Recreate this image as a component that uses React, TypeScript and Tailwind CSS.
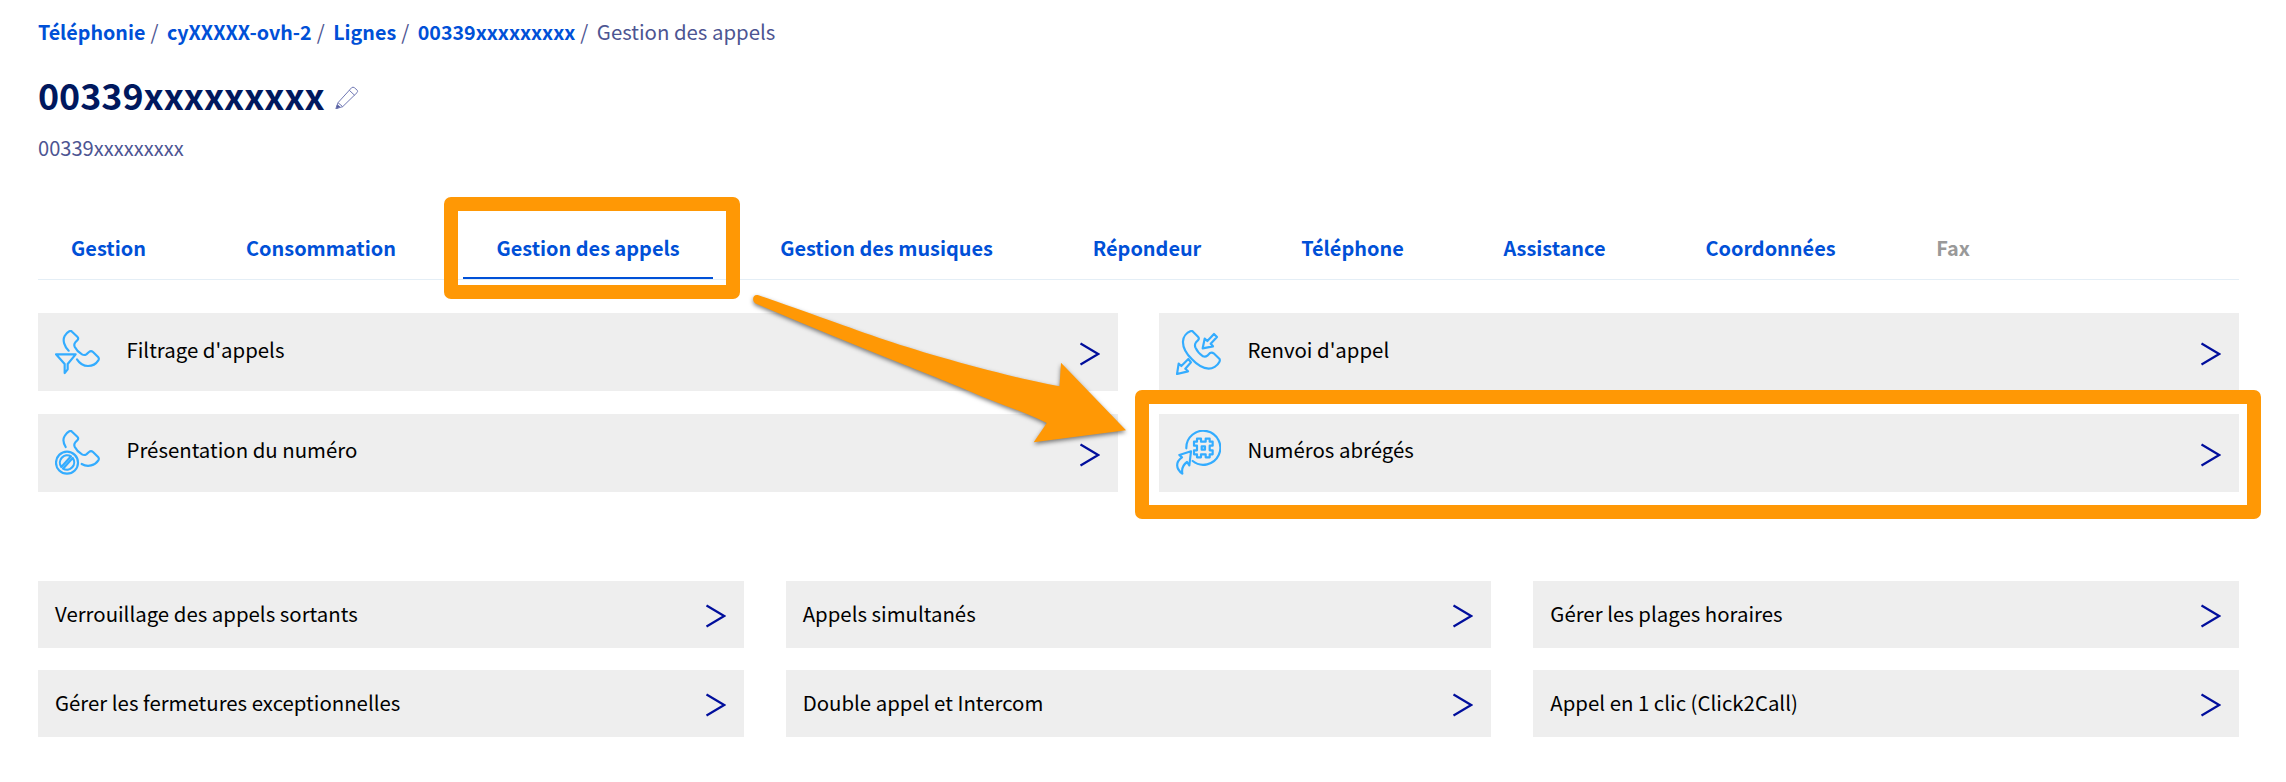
import type { ReactNode } from "react";

const crumbs = ["Téléphonie", "cyXXXXX-ovh-2", "Lignes", "00339xxxxxxxxx"];

const tabs = [
  { label: "Gestion", width: "w-[141px]" },
  { label: "Consommation", width: "w-[216px]" },
  { label: "Gestion des appels", width: "w-[250px]", active: true },
  { label: "Gestion des musiques", width: "w-[279px]" },
  { label: "Répondeur", width: "w-[174px]" },
  { label: "Téléphone", width: "w-[169px]" },
  { label: "Assistance", width: "w-[167px]" },
  { label: "Coordonnées", width: "w-[197px]" },
  { label: "Fax", width: "w-[100px]", disabled: true },
];

const services = [
  "Verrouillage des appels sortants",
  "Appels simultanés",
  "Gérer les plages horaires",
  "Gérer les fermetures exceptionnelles",
  "Double appel et Intercom",
  "Appel en 1 clic (Click2Call)",
];

function Icon({ children }: { children: ReactNode }) {
  return (
    <svg viewBox="0 0 135 135" className="size-[45px] shrink-0" fill="none" stroke="#33acff" strokeWidth="6.5" strokeLinecap="round" strokeLinejoin="round">
      {children}
    </svg>
  );
}

function FilterIcon() {
  return (
    <Icon>
      <path d="M41 62C28 49 22 31 29 18C33 11 39 6 43 4Q47 1 51 5L67 20Q72 25 67 31L61 37Q56 43 59 50C64 60 74 69 81 73Q88 77 94 73L102 66Q108 61 114 66L130 82Q133 86 130 91C123 102 111 108 99 108C85 108 73 99 66 88" />
      <path d="M3 73H62L38 102V118L29 129V102Z" />
    </Icon>
  );
}

function HiddenNumberIcon() {
  return (
    <Icon>
      <path d="M32 51C24 38 24 26 29 18C33 11 39 6 43 4Q47 1 51 5L67 20Q72 25 67 31L61 37Q56 43 59 50C64 60 74 69 81 73Q88 77 94 73L102 66Q108 61 114 66L130 82Q133 86 130 91C120 106 99 113 80 102" />
      <circle cx="36" cy="98" r="33" />
      <path d="M19 111A22 22 0 0 1 48 79ZM53 84A22 22 0 0 1 24 116Z" />
    </Icon>
  );
}

function ForwardIcon() {
  return (
    <Icon>
      <path d="M43 4Q47 1 51 5L66 20Q71 25 66 31L60 37Q55 43 58 52C63 63 72 73 81 79Q88 82 94 77L102 69Q108 66 113 70L130 86Q133 90 130 96C124 108 110 116 98 116C80 115 62 103 48 88C32 72 20 52 21 34C22 19 33 8 43 4Z" />
      <path d="M80 55L86 26L94 33L114 12L123 21L104 41L111 49Z" />
      <path d="M3 132L8 101L16 108L37 87L45 97L28 116L36 124Z" />
    </Icon>
  );
}

function ShortNumberIcon() {
  return (
    <Icon>
      <path d="M31 55A51 51 0 1 1 50 93" />
      <path d="M63 26H75V35H89V26H101V35H110V47H101V61H110V73H101V82H89V73H75V82H63V73H54V61H63V47H54V35H63Z" />
      <path d="M77 49H87V59H77Z" />
      <path d="M45 64L10 75L18 82C-2 96 -1 116 19 131C16 115 22 104 33 96L40 106Z" />
    </Icon>
  );
}

function Chevron() {
  return (
    <svg viewBox="0 0 20 24" className="h-6 w-5 shrink-0" fill="none" stroke="#000e9c" strokeWidth="2.3">
      <path d="M.5 1.5L18.2 12L.5 22.5" />
    </svg>
  );
}

function FeatureCard({ icon, label, lift }: { icon: ReactNode; label: string; lift?: boolean }) {
  return (
    <a className="flex h-[78px] items-start bg-[#eeeeee] pl-[17px] pr-[18px]">
      <span className={lift ? "mt-[16px] flex" : "mt-[17px] flex"}>{icon}</span>
      <span className={lift ? "ml-[26.5px] mt-[20px] flex-1" : "ml-[26.5px] mt-[21px] flex-1"}>{label}</span>
      <span className="mt-[29px] flex">
        <Chevron />
      </span>
    </a>
  );
}

function PencilIcon() {
  return (
    <svg viewBox="0 0 72 72" className="mt-[12px] h-6 w-6" fill="none" stroke="#7078b4" strokeWidth="3" strokeLinejoin="round">
      <path d="M3 68L9 50L50 5Q54 2 58 5L67 13Q69 17 66 20L23 62Z" />
      <path d="M43 13L59 28M9 50L23 62" />
      <path d="M3 68L7 56L15 63Z" fill="#4d5592" />
    </svg>
  );
}

export default function App() {
  return (
    <div className="relative h-[782px] w-[2286px] overflow-hidden bg-white pl-[38px] pr-[47px] pt-4 font-['Noto_Sans_CJK_SC','Noto_Sans',sans-serif] text-[20.4px] leading-[30px] text-black">
      <nav className="flex h-[30px] items-baseline whitespace-pre text-[#4d5592]">
        {crumbs.map((c) => (
          <span key={c} className="flex items-baseline">
            <a className="text-[19.7px] font-bold text-[#0050d7]">{c}</a>
            <span className="ml-[5px] mr-[8.5px]">/</span>
          </span>
        ))}
        <span>Gestion des appels</span>
      </nav>

      <header>
        <div className="mt-7 flex h-10 items-start">
          <h1 className="mr-[10px] text-[35.8px] font-bold leading-10 text-[#00185e]">00339xxxxxxxxx</h1>
          <PencilIcon />
        </div>
        <p className="mt-[19px] text-[20.1px] text-[#4d5592]">00339xxxxxxxxx</p>
      </header>

      <ul className="mt-[70px] flex gap-[34px] border-b border-[#e4eef6]">
        {tabs.map((t) => (
          <li
            key={t.label}
            className={`${t.width} flex shrink-0 justify-center whitespace-nowrap border-b-2 pb-[14px] text-[19.9px] font-bold ${
              t.active ? "border-[#0050d7]" : "border-transparent"
            } ${t.disabled ? "text-[#999999]" : "text-[#0050d7]"}`}
          >
            {t.label}
          </li>
        ))}
      </ul>

      <section className="mt-[33px] grid grid-cols-2 gap-x-[41px] gap-y-[23px]">
        <FeatureCard icon={<FilterIcon />} label="Filtrage d'appels" />
        <FeatureCard icon={<ForwardIcon />} label="Renvoi d'appel" />
        <FeatureCard icon={<HiddenNumberIcon />} label="Présentation du numéro" lift />
        <FeatureCard icon={<ShortNumberIcon />} label="Numéros abrégés" lift />
      </section>

      <section className="mt-[89px] grid grid-cols-3 gap-x-[42px] gap-y-[22px]">
        {services.map((s) => (
          <a key={s} className="flex h-[67px] items-start justify-between bg-[#eeeeee] pl-[17px] pr-[18px] pt-[17px]">
            <span>{s}</span>
            <span className="mt-[6px] flex">
              <Chevron />
            </span>
          </a>
        ))}
      </section>

      <div className="absolute left-[444px] top-[197px] h-[102px] w-[296px] rounded-[7px] border-[14px] border-[#ff9805]" />
      <div className="absolute left-[1135px] top-[390px] h-[129px] w-[1126px] rounded-[7px] border-[14px] border-[#ff9805]" />
      <svg viewBox="740 280 400 180" className="absolute left-[740px] top-[280px] h-[180px] w-[400px] drop-shadow-[0_2px_2px_rgba(0,0,0,0.5)]">
        <path
          d="M758.5 295.3C810 313 850 328 885.4 340C930 355 1005 376 1059.5 386.3L1061 362.7L1126 430.3L1033.7 442.3L1046.8 423C1030 414 1005 406 982.4 396.7C950 383 930 375 904.8 365C855 345 805 325 755.5 303.5C751.5 301 752.5 293.5 758.5 295.3Z"
          fill="#ff9805"
        />
      </svg>
    </div>
  );
}
